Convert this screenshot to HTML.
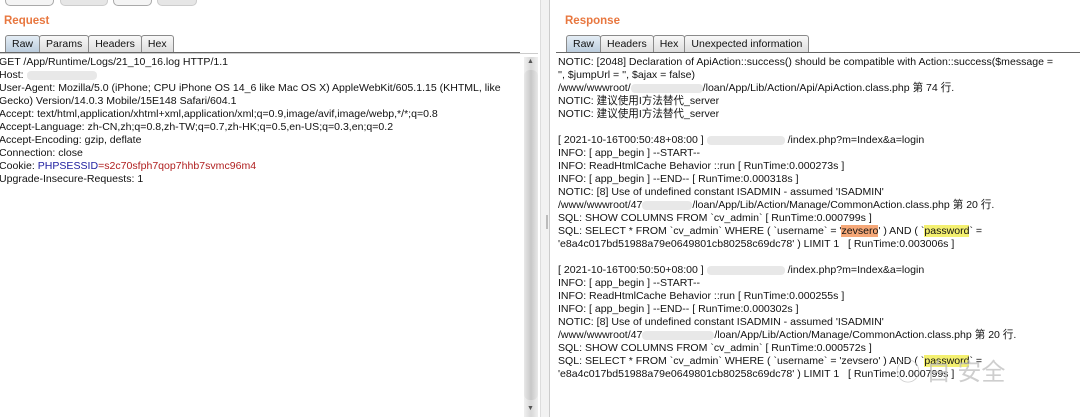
<!DOCTYPE html>
<html><head><meta charset="utf-8"><style>
body{margin:0;width:1080px;height:417px;background:#fff;position:relative;overflow:hidden;font-family:"Liberation Sans","Noto Sans CJK SC",sans-serif;font-size:11px;color:#111}
.abs{position:absolute}
.btn{position:absolute;top:-10px;height:14px;border:1px solid #aaa;border-radius:5px;background:#f4f4f4}
.title{position:absolute;top:15px;font-weight:bold;color:#e8773f;font-size:11.5px}
.tabs{position:absolute;top:35px;height:17px;display:flex}
.tab{border:1px solid #8a8a8a;border-bottom:none;background:linear-gradient(#f8f8f8,#dcdcdc);padding:2px 6px 0;height:15px;font-size:10.5px;margin-right:-1px;border-radius:3px 3px 0 0}
.tab.on{background:linear-gradient(#e4edf5,#b9cbdc)}
.txt{position:absolute;line-height:13px;white-space:pre;font-size:10.55px}
.blur{display:inline-block;background:#e8e8e8;height:9px;border-radius:4px;vertical-align:middle}
</style></head><body>
<div class="btn" style="left:5px;width:47px"></div>
<div class="btn" style="left:60px;width:46px;background:#e6e6e6;border-color:#ccc"></div>
<div class="btn" style="left:113px;width:37px"></div>
<div class="btn" style="left:157px;width:38px;background:#e6e6e6;border-color:#ccc"></div>
<div class="title" style="left:4px">Request</div>
<div class="tabs" style="left:5px"><div class="tab on">Raw</div><div class="tab">Params</div><div class="tab">Headers</div><div class="tab">Hex</div></div>
<div class="abs" style="left:0;top:52px;width:520px;height:1px;background:#666"></div>
<div class="abs" style="left:0;top:53px;width:538px;height:1px;background:#ccc"></div>
<div class="abs" style="left:524px;top:57px;width:14px;height:360px;background:linear-gradient(90deg,#f0f0f0,#d8d8d8,#f0f0f0)"></div>
<div class="abs" style="left:524px;top:70px;width:14px;height:330px;background:linear-gradient(90deg,#e8e8e8,#c8c8c8,#e8e8e8);border-radius:6px"></div>
<div class="abs" style="left:527px;top:58px;font-size:7px;color:#555">▲</div>
<div class="abs" style="left:527px;top:405px;font-size:7px;color:#555">▼</div>
<div class="abs" style="left:540px;top:0;width:8px;height:417px;background:#f2f2f2;border-left:1px solid #ddd;border-right:1px solid #ccc"></div>
<div class="abs" style="left:546px;top:215px;width:2px;height:14px;background:#bbb"></div>
<div class="txt" style="left:-1px;top:56px">GET /App/Runtime/Logs/21_10_16.log HTTP/1.1
Host: <span class="blur" style="width:70px"></span>
User-Agent: Mozilla/5.0 (iPhone; CPU iPhone OS 14_6 like Mac OS X) AppleWebKit/605.1.15 (KHTML, like
Gecko) Version/14.0.3 Mobile/15E148 Safari/604.1
Accept: text/html,application/xhtml+xml,application/xml;q=0.9,image/avif,image/webp,*/*;q=0.8
Accept-Language: zh-CN,zh;q=0.8,zh-TW;q=0.7,zh-HK;q=0.5,en-US;q=0.3,en;q=0.2
Accept-Encoding: gzip, deflate
Connection: close
Cookie: <span style="color:#2020a0">PHPSESSID</span><span style="color:#b02020">=s2c70sfph7qop7hhb7svmc96m4</span>
Upgrade-Insecure-Requests: 1</div>
<div class="title" style="left:565px">Response</div>
<div class="tabs" style="left:566px"><div class="tab on">Raw</div><div class="tab">Headers</div><div class="tab">Hex</div><div class="tab">Unexpected information</div></div>
<div class="abs" style="left:556px;top:52px;width:524px;height:1px;background:#666"></div>
<div class="txt" style="left:558px;top:56px">NOTIC: [2048] Declaration of ApiAction::success() should be compatible with Action::success($message =
'', $jumpUrl = '', $ajax = false)
/www/wwwroot/<span class="blur" style="width:72px"></span>/loan/App/Lib/Action/Api/ApiAction.class.php 第 74 行.
NOTIC: 建议使用I方法替代_server
NOTIC: 建议使用I方法替代_server

[ 2021-10-16T00:50:48+08:00 ] <span class="blur" style="width:78px"></span> /index.php?m=Index&amp;a=login
INFO: [ app_begin ] --START--
INFO: ReadHtmlCache Behavior ::run [ RunTime:0.000273s ]
INFO: [ app_begin ] --END-- [ RunTime:0.000318s ]
NOTIC: [8] Use of undefined constant ISADMIN - assumed 'ISADMIN'
/www/wwwroot/47<span class="blur" style="width:50px"></span>/loan/App/Lib/Action/Manage/CommonAction.class.php 第 20 行.
SQL: SHOW COLUMNS FROM `cv_admin` [ RunTime:0.000799s ]
SQL: SELECT * FROM `cv_admin` WHERE ( `username` = '<span style="background:#f6a878">zevsero</span>' ) AND ( `<span style="background:#f4f070">password</span>` =
'e8a4c017bd51988a79e0649801cb80258c69dc78' ) LIMIT 1   [ RunTime:0.003006s ]

[ 2021-10-16T00:50:50+08:00 ] <span class="blur" style="width:78px"></span> /index.php?m=Index&amp;a=login
INFO: [ app_begin ] --START--
INFO: ReadHtmlCache Behavior ::run [ RunTime:0.000255s ]
INFO: [ app_begin ] --END-- [ RunTime:0.000302s ]
NOTIC: [8] Use of undefined constant ISADMIN - assumed 'ISADMIN'
/www/wwwroot/47<span class="blur" style="width:72px"></span>/loan/App/Lib/Action/Manage/CommonAction.class.php 第 20 行.
SQL: SHOW COLUMNS FROM `cv_admin` [ RunTime:0.000572s ]
SQL: SELECT * FROM `cv_admin` WHERE ( `username` = 'zevsero' ) AND ( `<span style="background:#f4f070">password</span>` =
'e8a4c017bd51988a79e0649801cb80258c69dc78' ) LIMIT 1   [ RunTime:0.000799s ]</div>
<div class="abs" style="left:896px;top:352px;font-size:24px;color:rgba(190,190,190,0.75)">◯ 白 安全</div>
</body></html>
